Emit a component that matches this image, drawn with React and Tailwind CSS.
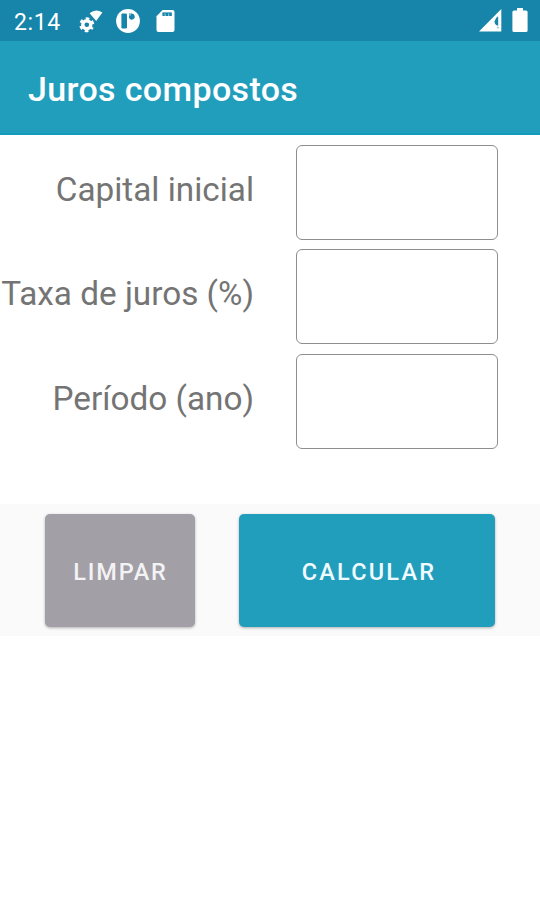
import React, { useState } from 'react';

const FIELDS = [
  { id: 'capital', label: 'Capital inicial' },
  { id: 'taxa', label: 'Taxa de juros (%)' },
  { id: 'periodo', label: 'Período (ano)' },
];

const EMPTY = { capital: '', taxa: '', periodo: '' };

// gear with a wifi wedge
const GearWifiIcon = () => (
  <svg className="w-6 h-6" viewBox="0 0 24 24" fill="none">
    <path d="M10.6 4.2Q16.8 -1 23.4 3.6L17.2 12Z" fill="#fff" />
    <circle cx="7.8" cy="15.8" r="4" stroke="#fff" strokeWidth="3.4" />
    <circle cx="7.8" cy="15.8" r="6.2" stroke="#fff" strokeWidth="2.6" strokeDasharray="3.4 3.09" strokeDashoffset="1.7" transform="rotate(30 7.8 15.8)" />
  </svg>
);

// round badge with a bar and a dot
const BadgeIcon = () => (
  <svg className="w-6 h-6" viewBox="0 0 24 24">
    <circle cx="12" cy="12" r="11.9" fill="#fff" />
    <rect x="5.4" y="4.4" width="5.6" height="15" rx="1.2" fill="#1784a9" />
    <path d="M13 4.6h2.8a3 3 0 1 1-2.8 4.2z" fill="#1784a9" />
    <circle cx="14" cy="5.8" r="1" fill="#8fc3d6" />
  </svg>
);

const SdCardIcon = () => (
  <svg className="w-[19px] h-[22px]" viewBox="0 0 19 22">
    <path d="M6.6 0H16.5A2 2 0 0 1 18.5 2V20A2 2 0 0 1 16.5 22H2.5A2 2 0 0 1 .5 20V6.2Z" fill="#fff" />
    <path d="M6.4 2.4h9.4v3.6h-9.4z" fill="#1784a9" />
    <path d="M8.6 3.6h1v2.4h-1zM12.2 3.6h1v2.4h-1z" fill="#a5cfdd" />
  </svg>
);

const SignalIcon = () => (
  <svg className="w-[23px] h-[23px]" viewBox="0 0 23 23">
    <path d="M22.3 0V22.5H0Z" fill="#fff" />
    <path d="M19.2 7.2V16.8Q15.4 15.8 15.6 12.2Q16 8.8 19.2 7.2Z" fill="#1784a9" />
    <path d="M18 17.8h1.8v1.4h-1.8z" fill="#8fc3d6" />
  </svg>
);

const BatteryIcon = () => (
  <svg className="w-4 h-6" viewBox="0 0 16 24">
    <path d="M5 0h6v2.4h3a1.6 1.6 0 0 1 1.6 1.6v18.4a1.6 1.6 0 0 1-1.6 1.6H2a1.6 1.6 0 0 1-1.6-1.6V4A1.6 1.6 0 0 1 2 2.4h3z" fill="#fff" />
  </svg>
);

const App = () => {
  const [values, setValues] = useState(EMPTY);
  const [total, setTotal] = useState(null);

  const handleChange = (id, value) => {
    setValues({ ...values, [id]: value });
  };

  const handleClear = () => {
    setValues(EMPTY);
    setTotal(null);
  };

  const handleSubmit = (e) => {
    e.preventDefault();
    const { capital, taxa, periodo } = values;
    if (!capital || !taxa || !periodo) return;
    setTotal(Number(capital) * Math.pow(1 + Number(taxa) / 100, Number(periodo)));
  };

  return (
    <div className="w-[540px] h-[900px] overflow-hidden bg-white font-['Roboto',sans-serif]">
      {/* status bar */}
      <div className="h-[41px] bg-[#1784a9] flex items-center pl-3.5 pr-3 text-white">
        <span className="w-[65px] text-[23px] leading-none tracking-[0.6px] pt-[3px]">2:14</span>
        <GearWifiIcon />
        <div className="ml-[13px] flex pt-px"><BadgeIcon /></div>
        <div className="ml-4 flex pt-px"><SdCardIcon /></div>
        <div className="ml-auto flex items-center gap-2.5">
          <SignalIcon />
          <div className="-mt-0.5 flex"><BatteryIcon /></div>
        </div>
      </div>

      {/* app bar */}
      <header className="h-[94px] bg-[#229ebd] border-b-2 border-[#149aba] flex items-center pl-7 pt-[3px]">
        <h1 className="text-[34px] leading-none font-medium text-white tracking-[0.35px]">Juros compostos</h1>
      </header>

      <form onSubmit={handleSubmit}>
        <div className="flex flex-col gap-[9.5px] pt-[9.5px]">
          {FIELDS.map((f) => (
            <div key={f.id} className="flex">
              <label htmlFor={f.id} className="w-[254px] h-[90px] flex items-center justify-end whitespace-nowrap text-[33.3px] leading-none text-[#747474]">
                {f.label}
              </label>
              <input
                id={f.id}
                inputMode="decimal"
                value={values[f.id]}
                onChange={(e) => handleChange(f.id, e.target.value)}
                className="ml-[42px] w-[202px] h-[95px] px-4 text-[34px] text-[#444] rounded-md border-[1.5px] border-[#8e8e8e] outline-none"
              />
            </div>
          ))}
        </div>

        <div className="mt-[55px] h-[132px] bg-[#fafafa] flex items-start pt-2.5 pl-[45px] gap-11">
          <button
            type="button"
            onClick={handleClear}
            className="w-[150px] h-[113px] rounded-[5px] bg-[#a29fa6] text-[#f3f2f4] text-[23.5px] font-medium tracking-[1.8px] pt-1.5 pl-px shadow-[0_1px_3px_rgba(0,0,0,0.3)]"
          >
            LIMPAR
          </button>
          <button
            type="submit"
            className="w-[256px] h-[113px] rounded-[5px] bg-[#229ebd] text-[#f0fbff] text-[23.5px] font-medium tracking-[2.2px] pt-1.5 pl-1 shadow-[0_1px_3px_rgba(0,0,0,0.3)]"
          >
            CALCULAR
          </button>
        </div>
      </form>

      {total !== null && (
        <p className="pt-8 text-center text-[34px] text-[#707070]">{total.toFixed(2)}</p>
      )}
    </div>
  );
};

export default App;
